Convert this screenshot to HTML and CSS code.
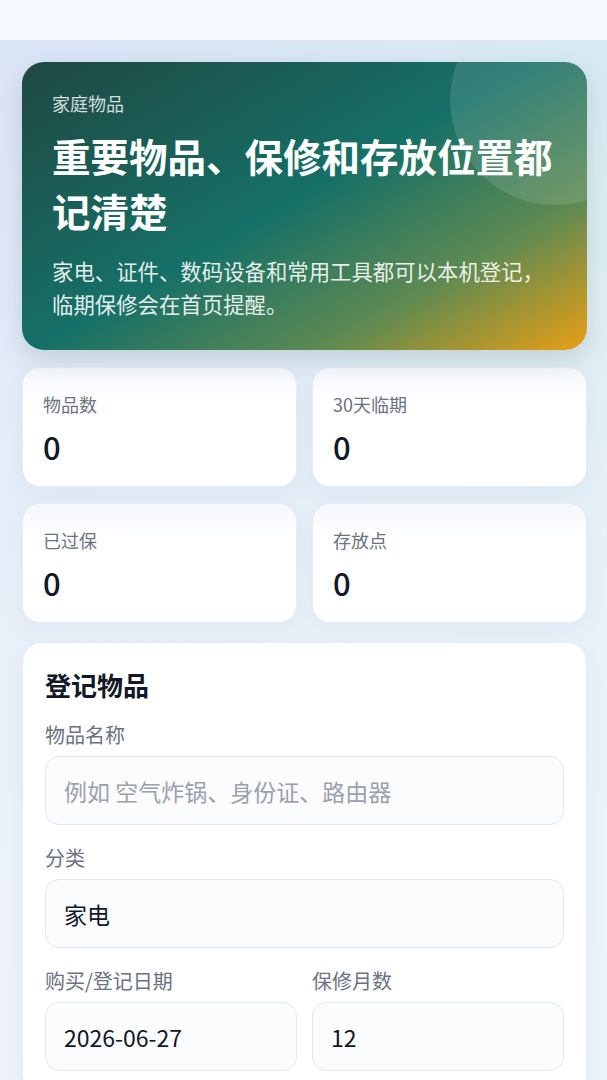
FILE: index.html
```html
<!DOCTYPE html>
<html lang="zh-CN">
  <head>
    <meta charset="UTF-8" />
    <meta name="viewport" content="width=device-width, initial-scale=1.0" />
    <link rel="stylesheet" href="styles.css">
  </head>
  <body>
    <div class="topbar"></div>
    <main class="page">
      <section class="hero">
        <div class="hero-glow"></div>
        <p class="hero-eyebrow">家庭物品</p>
        <h1 class="hero-title">重要物品、保修和存放位置都记清楚</h1>
        <p class="hero-text">家电、证件、数码设备和常用工具都可以本机登记，临期保修会在首页提醒。</p>
      </section>

      <section class="stats">
        <div class="stat">
          <div class="stat-label">物品数</div>
          <div class="stat-value">0</div>
        </div>
        <div class="stat">
          <div class="stat-label">30天临期</div>
          <div class="stat-value">0</div>
        </div>
        <div class="stat">
          <div class="stat-label">已过保</div>
          <div class="stat-value">0</div>
        </div>
        <div class="stat">
          <div class="stat-label">存放点</div>
          <div class="stat-value">0</div>
        </div>
      </section>

      <section class="panel">
        <h2 class="panel-title">登记物品</h2>
        <form class="form">
          <div class="field">
            <label for="name">物品名称</label>
            <input id="name" type="text" placeholder="例如 空气炸锅、身份证、路由器" />
          </div>
          <div class="field">
            <label for="category">分类</label>
            <select id="category">
              <option>家电</option>
              <option>证件</option>
              <option>数码设备</option>
              <option>常用工具</option>
            </select>
          </div>
          <div class="field-row">
            <div class="field">
              <label for="date">购买/登记日期</label>
              <input id="date" type="text" value="2026-06-27" />
            </div>
            <div class="field">
              <label for="months">保修月数</label>
              <input id="months" type="text" inputmode="numeric" value="12" />
            </div>
          </div>
        </form>
      </section>
    </main>
  </body>
</html>
```

FILE: styles.css
```css
:root {
  --text: #111827;
  --muted: #6b7280;
  --line: #e3e8f0;
  --font: "Noto Sans CJK SC", "Noto Sans", sans-serif;
}

* {
  box-sizing: border-box;
}

html,
body {
  margin: 0;
  min-height: 100%;
}

body {
  font-family: var(--font);
  color: var(--text);
  background: #eef2f9;
}

.topbar {
  height: 40px;
  background: #f5f8fe;
}

.page {
  padding: 22px 20px 40px 22px;
  min-height: 1040px;
  background: linear-gradient(
      180deg,
      rgba(240, 244, 251, 0) 0%,
      rgba(240, 244, 251, 0.75) 55%,
      rgba(240, 244, 251, 0.9) 100%
    ),
    linear-gradient(100deg, #dae4f7 0%, #d8e8f3 60%, #d6edef 100%);
}

/* Hero */

.hero {
  position: relative;
  overflow: hidden;
  padding: 28px 30px 30px;
  border-radius: 22px;
  color: #fff;
  background: linear-gradient(
    150deg,
    #1f4842 0%,
    #167067 48%,
    #5e8a52 75%,
    #e99f15 100%
  );
  box-shadow: 0 10px 24px rgba(31, 72, 66, 0.16);
}

.hero-glow {
  position: absolute;
  top: -67px;
  right: -73px;
  width: 210px;
  height: 210px;
  border-radius: 50%;
  background: rgba(255, 255, 255, 0.12);
}

.hero-eyebrow,
.hero-title,
.hero-text {
  position: relative;
  margin: 0;
}

.hero-eyebrow {
  font-size: 18px;
  line-height: 26px;
  color: rgba(255, 255, 255, 0.82);
}

.hero-title {
  margin-top: 12px;
  font-size: 38.5px;
  line-height: 55px;
  font-weight: 700;
}

.hero-text {
  margin-top: 16px;
  font-size: 21.4px;
  line-height: 33px;
  color: rgba(255, 255, 255, 0.9);
}

/* Stats */

.stats {
  margin-top: 17px;
  display: grid;
  grid-template-columns: 1fr 1fr;
  gap: 16px 15px;
}

.stat {
  height: 120px;
  padding: 23px 20px 0;
  border-radius: 18px;
  border: 1px solid rgba(226, 232, 240, 0.8);
  background: linear-gradient(180deg, #f4f7fd 0%, #ffffff 30%);
  box-shadow: 0 8px 22px rgba(40, 70, 110, 0.05);
}

.stat-label {
  font-size: 18px;
  line-height: 26px;
  color: var(--muted);
}

.stat-value {
  margin-top: 10px;
  font-size: 31px;
  line-height: 40px;
  font-weight: 500;
  color: var(--text);
}

/* Form panel */

.panel {
  margin-top: 19px;
  padding: 24px 22px 24px;
  border-radius: 20px;
  border: 1px solid rgba(226, 232, 240, 0.8);
  background: #fff;
  box-shadow: 0 8px 22px rgba(40, 70, 110, 0.05);
}

.panel-title {
  margin: 0 0 18px;
  font-size: 26px;
  line-height: 36px;
  font-weight: 700;
}

.form {
  display: flex;
  flex-direction: column;
  gap: 19px;
}

.field {
  display: flex;
  flex-direction: column;
  min-width: 0;
}

.field label {
  margin-bottom: 7px;
  font-size: 20px;
  line-height: 28px;
  color: var(--muted);
}

.field input,
.field select {
  width: 100%;
  height: 69px;
  padding: 0 18px;
  font: inherit;
  font-size: 23px;
  color: var(--text);
  background: #fbfcfe;
  border: 1px solid var(--line);
  border-radius: 14px;
  outline: none;
  appearance: none;
  -webkit-appearance: none;
}

.field input::placeholder {
  color: #9aa1ab;
}

.field-row {
  display: grid;
  grid-template-columns: 1fr 1fr;
  gap: 15px;
}
```
